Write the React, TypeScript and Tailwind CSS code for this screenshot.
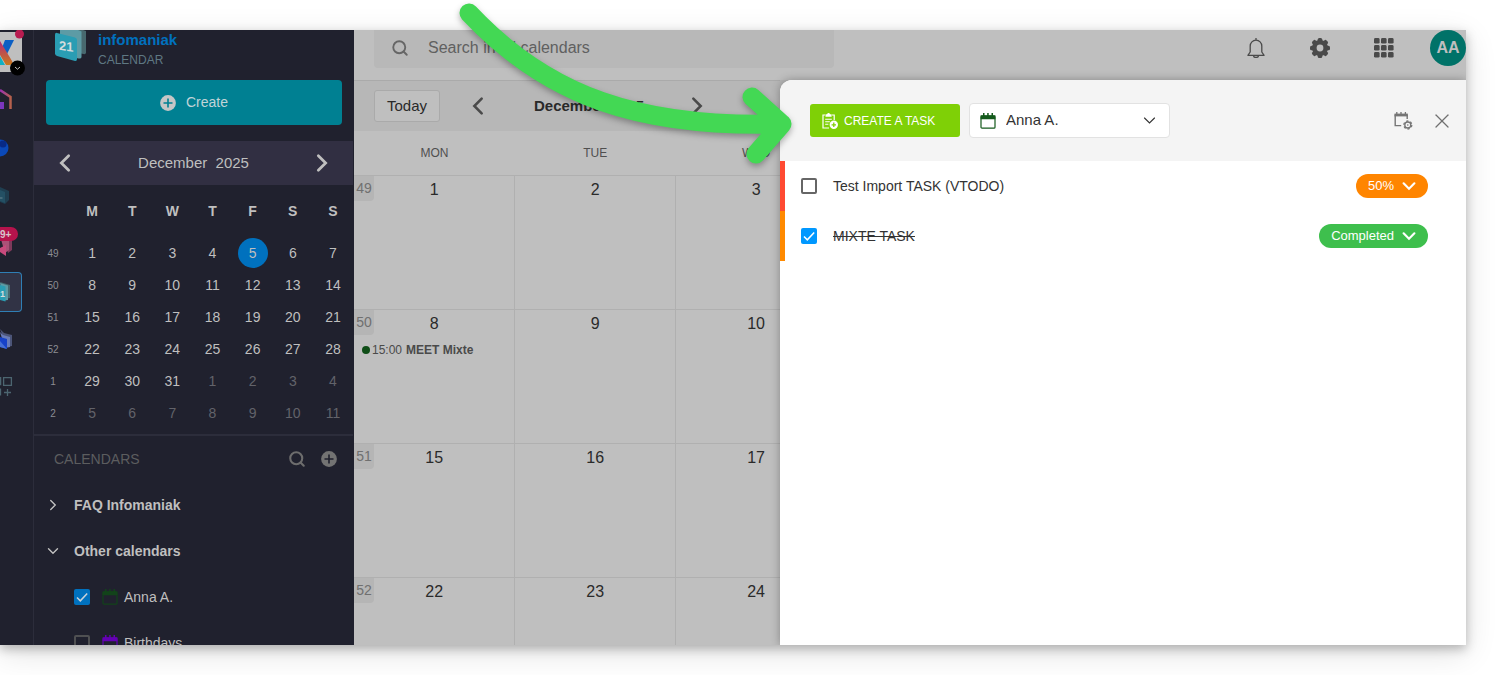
import clsx from "clsx";
import { LuSearch, LuX } from "react-icons/lu";

const weeks = [
  { week: 49, days: [1, 2, 3, 4, 5, 6, 7] },
  { week: 50, days: [8, 9, 10, 11, 12, 13, 14] },
  { week: 51, days: [15, 16, 17, 18, 19, 20, 21] },
  { week: 52, days: [22, 23, 24, 25, 26, 27, 28] },
  { week: 1, days: [29, 30, 31, 1, 2, 3, 4], nextFrom: 3 },
  { week: 2, days: [5, 6, 7, 8, 9, 10, 11], nextFrom: 0 },
];

const tasks = [
  { id: "import", title: "Test Import TASK (VTODO)", done: false, status: "50%", bar: "bg-[#ff4a32]", pill: "bg-[#ff8500]" },
  { id: "mixte", title: "MIXTE TASK", done: true, status: "Completed", bar: "bg-[#ff8a00]", pill: "bg-[#3ebf4d]" },
];

const chevrons = {
  left: "M16 4 8 12l8 8",
  right: "m8 4 8 8-8 8",
  down: "m4 8 8 8 8-8",
};

function Chevron({ to, size, stroke = 3, className }: { to: keyof typeof chevrons; size: number; stroke?: number; className?: string }) {
  return (
    <svg viewBox="0 0 24 24" width={size} height={size} className={className} fill="none" stroke="currentColor" strokeWidth={stroke} strokeLinecap="round" aria-hidden="true">
      <path d={chevrons[to]} />
    </svg>
  );
}

function PlusCircle({ fill, plus }: { fill: string; plus: string }) {
  return (
    <svg viewBox="0 0 16 16" className="size-4" aria-hidden="true">
      <circle cx="8" cy="8" r="7.9" fill={fill} />
      <path d="M8 3.500v9M3.500 8h9" stroke={plus} strokeWidth="1.600" />
    </svg>
  );
}

function CalendarIcon({ className }: { className?: string }) {
  return (
    <svg viewBox="0 0 16 16" className={clsx("size-4 shrink-0", className)} fill="none" aria-hidden="true">
      <rect x="1" y="3" width="14" height="12.2" rx="1" stroke="currentColor" strokeWidth="1.2" />
      <path d="M.6 2.2h14.8v4H.6zM3 0h1.5v3H3zM7.2 0h1.5v3H7.2zM11.5 0H13v3h-1.5z" fill="currentColor" />
    </svg>
  );
}

function BellIcon() {
  return (
    <svg viewBox="0 0 18 20" className="h-5 w-[18px]" fill="none" stroke="#4a4a4a" strokeWidth="1.300" aria-hidden="true">
      <path d="M9 0v2M3.200 14V8a5.800 5.800 0 0 1 11.600 0v6l2.300 3.300H.9zM6.500 17.500a2.500 2 0 0 0 5 0" strokeLinejoin="round" />
    </svg>
  );
}

function GearIcon() {
  return (
    <svg viewBox="-10 -10 20 20" className="size-5" aria-hidden="true">
      {[0, 45, 90, 135].map((angle) => (
        <rect key={angle} x="-2.3" y="-10" width="4.6" height="20" rx="1.6" fill="#4a4a4a" transform={`rotate(${angle})`} />
      ))}
      <circle r="8" fill="#4a4a4a" />
      <circle r="3.4" fill="#bfbfbf" />
    </svg>
  );
}

function AppsIcon() {
  return (
    <svg viewBox="0 0 20 20" className="size-5" fill="#4a4a4a" aria-hidden="true">
      {[0, 7, 14].map((y) => [0, 7, 14].map((x) => <rect key={`${x}-${y}`} x={x} y={y} width="5.6" height="5.6" rx="1.4" />))}
    </svg>
  );
}

function CreateTaskIcon() {
  return (
    <svg viewBox="0 0 16 16" className="size-4 shrink-0" fill="none" stroke="#fff" aria-hidden="true">
      <path d="M3 2H1v13h6M10 2h2.2v5" strokeWidth="1.2" />
      <path d="M3.5 1.2h1.6a1.5 1.5 0 0 1 2.9 0h1.6v2.6H3.5z" fill="#fff" stroke="none" />
      <path d="M3.2 6.3h6.6M3.2 8.8h4.6M3.2 11.3h3.2" strokeWidth="1.1" />
      <circle cx="11.8" cy="11.8" r="4.2" fill="#fff" stroke="none" />
      <path d="M11.8 9.6V14M9.6 11.8H14" stroke="#7fd006" strokeWidth="1.3" />
    </svg>
  );
}

function CalendarSettingsIcon() {
  return (
    <svg viewBox="0 0 19 18" className="h-[18px] w-[19px]" fill="none" stroke="#757575" aria-hidden="true">
      <path d="M1.2 2.6v11h6M13.2 3v4" strokeWidth="1.4" />
      <path d="M.5 1.6h13.4v2.800H.5z" fill="#757575" stroke="none" />
      <path d="M2.8 0v3M7 0v3M11.4 0v3" strokeWidth="1.3" />
      <circle cx="13.8" cy="13" r="4" strokeWidth="1.3" strokeDasharray="2.2 1.99" />
      <circle cx="13.8" cy="13" r="3" strokeWidth="1.3" />
      <circle cx="13.8" cy="13" r=".8" fill="#757575" stroke="none" />
    </svg>
  );
}

function CalendarLogo() {
  return (
    <svg viewBox="0 0 31 33" className="h-[33px] w-[31px]" aria-hidden="true">
      <path d="M9 0h19l3 1v21.500q0 2-2.500 1.600L9 20z" fill="#48696f" />
      <path d="M5 0h18l3.500 1.500V27q0 2-3 1.500L5 24z" fill="#5d9ba5" />
      <path d="M0 4.500q0-2 2-1.600L20 7.500q2 .6 2 2.600V29q0 2.400-2 1.900L2 26q-2-.6-2-2.500z" fill="#2a9db3" />
      <text x="4" y="20" transform="skewY(9) translate(0 -1)" fontSize="13" fontWeight="700" fill="#d5dcdd" fontFamily="Liberation Sans, sans-serif">
        21
      </text>
    </svg>
  );
}

function CheckBox({ id, checked, dark }: { id: string; checked: boolean; dark?: boolean }) {
  return (
    <span className="grid size-4 shrink-0 place-items-center">
      <input
        id={id}
        type="checkbox"
        defaultChecked={checked}
        className={clsx(
          "peer col-start-1 row-start-1 size-4 appearance-none rounded-[2px] border-2 checked:border-0",
          dark ? "border-[#4f5052] checked:bg-[#0071be]" : "border-[#666] checked:bg-[#0098ff]",
        )}
      />
      <svg viewBox="0 0 16 16" className="pointer-events-none invisible col-start-1 row-start-1 size-4 peer-checked:visible" fill="none" aria-hidden="true">
        <path d="m3 8.500 3.300 3.300L13.200 4.500" stroke={dark ? "#c9d3da" : "#fff"} strokeWidth="1.500" />
      </svg>
    </span>
  );
}

function Rail() {
  const item = "block h-10 w-[22px] shrink-0";
  return (
    <nav aria-label="Apps" className="flex w-[34px] shrink-0 flex-col gap-2 border-r border-[#2c2d3b] pt-0.5">
      <button aria-label="Workspace" className={item}>
        <svg viewBox="0 0 22 40" className="h-10 w-[22px] overflow-visible">
          <path d="M0 0h20a2 2 0 0 1 2 2v36a2 2 0 0 1-2 2H0z" fill="#bfbfbf" />
          <path d="M5 8h9L7 22l-5-6z" fill="#0b5fc4" />
          <path d="M0 24l5 9H0z" fill="#10b1c4" />
          <path d="M0 9l12 20q2 4-3 4H6L0 23z" fill="url(#x)" />
          <circle cx="19.500" cy="2" r="4.500" fill="#b91c50" />
          <circle cx="17.500" cy="36" r="7.500" fill="#000" />
          <path d="m15 35 2.500 2.200L20 35" stroke="#bfbfbf" fill="none" />
          <defs>
            <linearGradient id="x" x2="0" y2="1">
              <stop stopColor="#b52a78" />
              <stop offset="1" stopColor="#c97a1c" />
            </linearGradient>
          </defs>
        </svg>
      </button>
      <button aria-label="Home" className={item}>
        <svg viewBox="0 0 22 40" className="h-10 w-[22px]" fill="none">
          <path d="M0 10l10.500 7v12" stroke="url(#h)" strokeWidth="2.500" />
          <path d="M0 22h4v7H0z" fill="#7b36bd" />
          <defs>
            <linearGradient id="h" x2="1">
              <stop stopColor="#9a30b4" />
              <stop offset="1" stopColor="#b5604c" />
            </linearGradient>
          </defs>
        </svg>
      </button>
      <button aria-label="Assistant" className={item}>
        <svg viewBox="0 0 22 40" className="h-10 w-[22px]">
          <circle cx="0" cy="20" r="8.500" fill="#0b49b8" />
          <circle cx="3" cy="16" r="3.500" fill="#082a86" />
        </svg>
      </button>
      <button aria-label="Drive" className={item}>
        <svg viewBox="0 0 22 40" className="h-10 w-[22px]">
          <path d="M0 11 9 15v9l-4 4-5-2z" fill="#1f3e50" />
          <path d="M0 14l5 2v11l-5-2z" fill="#245064" />
          <path d="M0 22h2.500" stroke="#6b8792" />
        </svg>
      </button>
      <button aria-label="Mail" className={item}>
        <svg viewBox="0 0 22 40" className="h-10 w-[22px]">
          <path d="M4 12h8v14l-4 3z" fill="#7e3a5b" />
          <path d="M0 12h9v14l-4 3z" fill="#a95277" />
          <path d="M0 24l6-3v11l-6-4z" fill="#c84a7c" />
          <path d="M0 3h11a7 7 0 0 1 0 14H0z" fill="#b5134c" />
          <text x="0" y="13.500" fontSize="10" fontWeight="700" fill="#d8c3cb" fontFamily="Liberation Sans, sans-serif">
            9+
          </text>
        </svg>
      </button>
      <button aria-label="Calendar" aria-current="page" className={clsx(item, "rounded-r border border-l-0 border-[#2f7fb5] bg-[#313345]")}>
        <svg viewBox="0 0 21 38" className="h-[38px] w-[21px]">
          <path d="M0 9l10 3v13l-5 1z" fill="#48696f" />
          <path d="M0 10l8 2.500V27l-4 .5z" fill="#5d9ba5" />
          <path d="M0 12l5.500 1.500V28.500l-5.500-1.500z" fill="#2a9db3" />
          <text x="0" y="24" fontSize="9" fontWeight="700" fill="#d5dcdd" fontFamily="Liberation Sans, sans-serif">
            1
          </text>
        </svg>
      </button>
      <button aria-label="Files" className={item}>
        <svg viewBox="0 0 22 40" className="h-10 w-[22px]">
          <path d="M0 9l4 4 8 2v11l-5 1z" fill="#4c5578" />
          <path d="M0 12l3 3 7 2v10l-5 1z" fill="#6a7cb8" />
          <path d="M0 17l7 2v10l-7-2z" fill="#1742c8" />
          <path d="M0 21l7 8-7-2z" fill="#4670d6" />
        </svg>
      </button>
      <button aria-label="More" className={item}>
        <svg viewBox="0 0 22 40" className="h-10 w-[22px]" fill="none" stroke="#4c6570" strokeWidth="1.300">
          <path d="M0 9.600h.600v7H0M3.600 9.600h7.800v7.800H3.600zM.5 20.500v7M7.500 21v7M4 24.500h7" />
        </svg>
      </button>
    </nav>
  );
}

function Sidebar() {
  const row = "flex h-[46px] items-center";
  return (
    <aside className="flex w-80 shrink-0 flex-col">
      <div className="flex h-[50px] shrink-0 gap-3 pl-[21px]">
        <CalendarLogo />
        <div className="leading-5">
          <p className="text-[15px] font-black text-[#0071be]">infomaniak</p>
          <p className="text-[12px] text-[#5f7883]">CALENDAR</p>
        </div>
      </div>
      <button className="mx-3 flex h-[45px] shrink-0 items-center justify-center gap-2.5 rounded bg-[#008092] text-[14px] text-[#c0d4d8]">
        <PlusCircle fill="#c6c6c6" plus="#008092" />
        Create
      </button>
      <div className="mt-4 mr-px flex h-11 shrink-0 items-center justify-between bg-[#312f42] px-5 text-[15px] text-[#bfbfbf]">
        <button aria-label="Previous month">
          <Chevron to="left" size={22} />
        </button>
        December&nbsp; 2025
        <button aria-label="Next month">
          <Chevron to="right" size={22} />
        </button>
      </div>
      <table className="w-[319px] table-fixed text-center text-[14px] text-[#bfbfbf]">
        <thead>
          <tr className="h-[52px]">
            <th className="w-[38px]" aria-label="Week" />
            {["M", "T", "W", "T", "F", "S", "S"].map((day, i) => (
              <th key={i} scope="col">
                {day}
              </th>
            ))}
          </tr>
        </thead>
        <tbody>
          {weeks.map(({ week, days, nextFrom = 7 }) => (
            <tr key={week} className="h-8">
              <th scope="row" className="text-[10px] font-normal text-[#8c8d93]">
                {week}
              </th>
              {days.map((day, i) => (
                <td key={day} className={clsx(i >= nextFrom && "text-[#62636a]")}>
                  <span className={clsx("mx-auto flex items-center justify-center", week === 49 && day === 5 && "size-[30px] rounded-full bg-[#0071be]")}>
                    {day}
                  </span>
                </td>
              ))}
            </tr>
          ))}
        </tbody>
      </table>
      <div className="mt-[5px] mr-px border-t-2 border-[#2c2d3b] pl-5 text-[14px] text-[#bfbfbf]">
        <div className={clsx(row, "pr-4 text-[#5c5d5f]")}>
          <h2>CALENDARS</h2>
          <button aria-label="Search calendars" className="ml-auto">
            <LuSearch size={18} strokeWidth={2.8} color="#6d6d6d" />
          </button>
          <button aria-label="Add calendar" className="ml-[15px]">
            <PlusCircle fill="#737373" plus="#20212e" />
          </button>
        </div>
        <button className={clsx(row, "-ml-2.5 gap-3 font-bold")}>
          <Chevron to="right" size={18} stroke={2.5} className="scale-75" /> FAQ Infomaniak
        </button>
        <button className={clsx(row, "-ml-2.5 gap-3 font-bold")}>
          <Chevron to="down" size={18} stroke={2.5} className="scale-75" /> Other calendars
        </button>
        <div className={clsx(row, "pl-5")}>
          <CheckBox id="cal-anna" checked dark />
          <label htmlFor="cal-anna" className="ml-3 flex items-center gap-1.5">
            <CalendarIcon className="text-[#12431a]" /> Anna A.
          </label>
        </div>
        <div className={clsx(row, "pl-5")}>
          <CheckBox id="cal-birthdays" checked={false} dark />
          <label htmlFor="cal-birthdays" className="ml-3 flex items-center gap-1.5">
            <CalendarIcon className="text-[#6400b4]" /> Birthdays
          </label>
        </div>
      </div>
    </aside>
  );
}

function Header() {
  return (
    <header className="flex h-[50px] shrink-0 pl-5">
      <label className="flex h-[38px] w-[460px] items-center gap-[19px] rounded-b bg-[#b8b8b8] pb-0.5 pl-[17px]">
        <LuSearch size={18} strokeWidth={2.5} color="#666" />
        <input
          type="search"
          aria-label="Search in all calendars"
          placeholder="Search in all calendars"
          className="flex-1 bg-transparent text-[16px] outline-none placeholder:text-[#606060]"
        />
      </label>
      <div className="ml-auto grid h-9 w-48 grid-cols-3 place-items-center">
        <button aria-label="Notifications">
          <BellIcon />
        </button>
        <button aria-label="Settings">
          <GearIcon />
        </button>
        <button aria-label="Applications">
          <AppsIcon />
        </button>
      </div>
      <button className="ml-3.5 size-9 rounded-full bg-[#007268] text-[16px] font-bold text-[#bfbfbf]">AA</button>
    </header>
  );
}

function Month() {
  return (
    <section className="w-[426px] shrink-0 overflow-hidden border-t border-[#aaa] bg-[#bfbfbf]">
      <div className="flex h-[50px] items-center bg-[#b7b7b7] pl-5 text-[15px] text-[#2a2a2a]">
        <button className="h-8 w-[66px] rounded-[3px] border border-[#aaa] bg-[#bfbfbf] font-medium">Today</button>
        <button aria-label="Previous" className="ml-[27px] text-[#4a4a4a]">
          <Chevron to="left" size={22} stroke={2.8} />
        </button>
        <h1 className="w-[151px] pl-[45px] font-bold whitespace-nowrap">December 2025</h1>
        <button aria-label="Next" className="ml-[46px] text-[#4a4a4a]">
          <Chevron to="right" size={22} stroke={2.8} />
        </button>
      </div>
      <table className="w-[483px] table-fixed text-[#2a2a2a]">
        <thead>
          <tr className="h-11 border-b border-[#b0b0b0] text-[12px] text-[#4f4f4f]">
            {["MON", "TUE", "WED"].map((day) => (
              <th key={day} scope="col" className="font-normal">
                {day}
              </th>
            ))}
          </tr>
        </thead>
        <tbody>
          {weeks.slice(0, 4).map(({ week, days }) => (
            <tr key={week} className="h-[134px] border-b border-[#b0b0b0]">
              {days.slice(0, 3).map((day, i) => (
                <td key={day} className="border-r border-[#b0b0b0] p-0 align-top">
                  <div className="grid grid-cols-[20px_1fr_20px] text-center text-[16px]">
                    {i === 0 && <span className="h-[25px] rounded-br bg-[#b5b5b5] text-[14px] leading-6 text-[#707070]">{week}</span>}
                    <span className="col-start-2 leading-7">{day}</span>
                  </div>
                  {day === 8 && (
                    <button className="ml-2 flex items-center gap-0.5 text-[12px] leading-6 text-[#4a4a4a]">
                      <span className="size-2 rounded-full bg-[#0f4d17]" />
                      15:00 <b className="ml-0.5">MEET Mixte</b>
                    </button>
                  )}
                </td>
              ))}
            </tr>
          ))}
        </tbody>
      </table>
    </section>
  );
}

function TaskPanel() {
  return (
    <section className="relative min-w-0 flex-1 rounded-tl-xl bg-white shadow-[0_0_10px_rgba(0,0,0,0.3)]">
      <div className="flex h-[81px] items-center gap-[9px] rounded-tl-xl bg-[#f4f4f4] pr-3 pl-[30px]">
        <button className="flex h-[33px] w-[150px] items-center gap-1.5 rounded-[3px] bg-[#7fd006] pl-3 text-[12px] text-white">
          <CreateTaskIcon />
          CREATE A TASK
        </button>
        <div className="grid h-[35px] w-[201px] items-center rounded border border-[#e2e2e2] bg-white text-[#333]">
          <CalendarIcon className="pointer-events-none z-10 col-start-1 row-start-1 ml-2.5 text-[#145a1c]" />
          <select aria-label="Calendar" className="col-start-1 row-start-1 h-full w-full appearance-none bg-transparent pl-9 text-[15px]">
            <option>Anna A.</option>
          </select>
          <Chevron to="down" size={15} stroke={1.8} className="pointer-events-none col-start-1 row-start-1 mr-3 justify-self-end" />
        </div>
        <button aria-label="Calendar settings" className="mr-2 ml-auto">
          <CalendarSettingsIcon />
        </button>
        <button aria-label="Close" className="text-[#707070]">
          <LuX size={24} strokeWidth={1.3} />
        </button>
      </div>
      <ul>
        {tasks.map((task) => (
          <li key={task.id} className="flex h-[50px] items-center pr-[38px] text-[14px] text-[#333]">
            <span className={clsx("mr-4 h-full w-[5px]", task.bar)} />
            <CheckBox id={task.id} checked={task.done} />
            <label htmlFor={task.id} className={clsx("pl-4", task.done && "line-through")}>
              {task.title}
            </label>
            <button className={clsx("ml-auto flex h-6 items-center gap-1.5 rounded-full pr-2.5 pl-3 text-[13px] text-white", task.pill)}>
              {task.status}
              <Chevron to="down" size={18} stroke={3.2} className="scale-90" />
            </button>
          </li>
        ))}
      </ul>
    </section>
  );
}

function Arrow() {
  return (
    <svg
      viewBox="0 0 350 170"
      className="pointer-events-none absolute top-0 left-[450px] z-20 h-[170px] w-[350px] drop-shadow-[0_3px_3px_rgba(0,0,0,0.3)]"
      fill="none"
      stroke="#43d854"
      strokeWidth="19"
      strokeLinecap="round"
      strokeLinejoin="round"
      aria-hidden="true"
    >
      <path d="M19 13C98 97 190 128 332 124M302 97 332 124 306 154" />
    </svg>
  );
}

export default function App() {
  return (
    <div className="relative h-screen overflow-hidden bg-white py-[30px] pr-[30px] font-['Liberation_Sans',Arial,sans-serif]">
      <div className="h-full shadow-[0_4px_10px_rgba(0,0,0,0.25),0_8px_30px_rgba(0,0,0,0.12)]">
        <div className="flex h-full overflow-hidden bg-[#20212e]">
          <Rail />
          <Sidebar />
          <main className="flex min-w-0 flex-1 flex-col bg-[#bfbfbf]">
            <Header />
            <div className="flex min-h-0 flex-1 bg-[#b7b7b7]">
              <Month />
              <TaskPanel />
            </div>
          </main>
        </div>
      </div>
      <Arrow />
    </div>
  );
}
